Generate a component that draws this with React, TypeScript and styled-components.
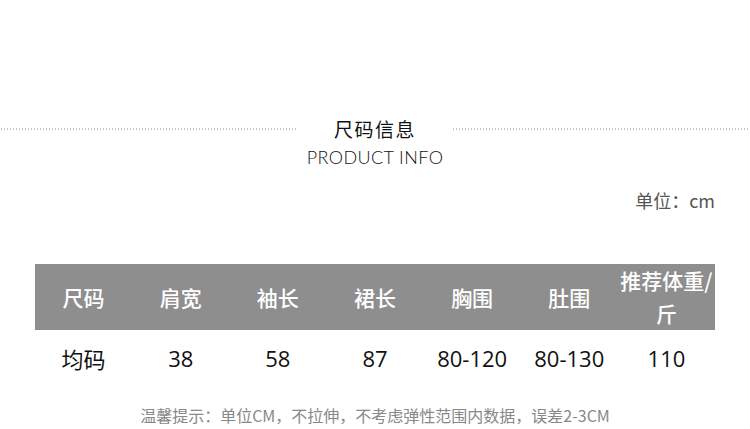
import React from "react";
import styled, {createGlobalStyle} from "styled-components";

const GlobalStyle = createGlobalStyle`
  body {
    margin: 0;
    background: #ffffff;
    font-family: "Noto Sans CJK SC", "Noto Sans", sans-serif;
  }
`;

const Page = styled.div`
  width: 750px;
  height: 429px;
  overflow: hidden;
  padding-top: 116px;
  box-sizing: border-box;
`;

const TitleRow = styled.div`
  display: flex;
  align-items: flex-start;
`;

const DotLine = styled.div`
  flex: 1;
  height: 2px;
  margin-top: 12px;
  background-image: radial-gradient(circle, #c4c4c4 0.8px, transparent 1px);
  background-size: 3px 2px;
  background-repeat: repeat-x;
`;

const TitleBlock = styled.div`
  display: flex;
  flex-direction: column;
  align-items: center;
  margin: 0 9px;
`;

const TitleCn = styled.div`
  font-size: 19px;
  letter-spacing: 1.5px;
  line-height: 26px;
  color: #111;
`;

const TitleEn = styled.div`
  font-family: Lato, "Open Sans", sans-serif;
  font-weight: 300;
  font-size: 18px;
  line-height: 24px;
  color: #111;
  margin-top: 3px;
  letter-spacing: 0.4px;
`;

const Unit = styled.div`
  text-align: right;
  padding-right: 35px;
  margin-top: 19px;
  font-size: 18px;
  line-height: 24px;
  color: #555;
`;

const Table = styled.div`
  margin: 52px 35px 0;
  display: grid;
  grid-template-columns: repeat(7, 1fr);
`;

const HeadCell = styled.div`
  background: #8e8e8e;
  color: #fff;
  height: 66px;
  display: flex;
  align-items: center;
  justify-content: center;
  text-align: center;
  font-size: 21px;
  font-weight: 500;
  line-height: 33px;
`;

const BodyCell = styled.div<{$latin?: boolean}>`
  height: 55px;
  display: flex;
  align-items: center;
  justify-content: center;
  font-size: 22px;
  color: #111;
  font-family: ${p => p.$latin ? '"Open Sans", "Noto Sans", sans-serif' : '"Noto Sans CJK SC", sans-serif'};
`;

const Note = styled.div`
  margin-top: 19px;
  text-align: center;
  font-size: 16px;
  color: #888;
  line-height: 22px;
`;

const heads = ["尺码", "肩宽", "袖长", "裙长", "胸围", "肚围", "推荐体重/斤"];
const row = ["均码", "38", "58", "87", "80-120", "80-130", "110"];

const App: React.FC = () => {
    return (
        <Page>
            <GlobalStyle/>
            <TitleRow>
                <DotLine/>
                <TitleBlock>
                    <TitleCn>尺码信息</TitleCn>
                    <TitleEn>PRODUCT INFO</TitleEn>
                </TitleBlock>
                <DotLine/>
            </TitleRow>
            <Unit>单位：cm</Unit>
            <Table>
                {heads.map(h => <HeadCell key={h}>{h}</HeadCell>)}
                {row.map((v, i) => <BodyCell key={i} $latin={i > 0}>{v}</BodyCell>)}
            </Table>
            <Note>温馨提示：单位CM，不拉伸，不考虑弹性范围内数据，误差2-3CM</Note>
        </Page>
    );
}

export default App;
